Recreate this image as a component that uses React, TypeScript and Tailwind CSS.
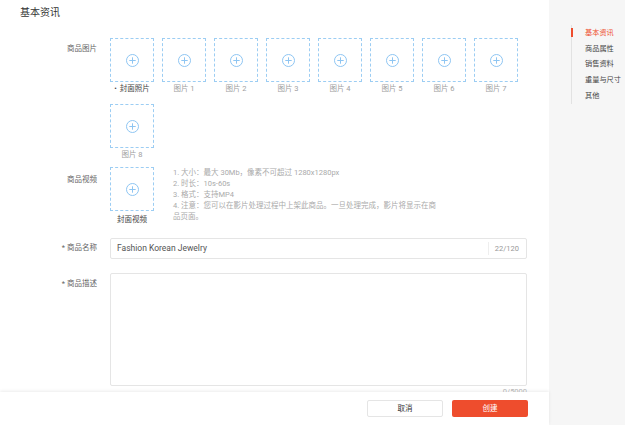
import React from "react";

const font = "font-['Roboto','Noto_Sans_CJK_SC',sans-serif]";

function PlusCircle() {
  return (
    <svg width="13" height="13" viewBox="0 0 13 13" fill="none" stroke="#8ec5f2" strokeWidth="1">
      <circle cx="6.5" cy="6.5" r="6" />
      <line x1="6.5" y1="3.3" x2="6.5" y2="9.7" />
      <line x1="3.3" y1="6.5" x2="9.7" y2="6.5" />
    </svg>
  );
}

function UploadBox({ caption, main }: { caption: string; main?: boolean }) {
  return (
    <div className="flex w-[44px] flex-col items-center">
      <div className="flex h-[44px] w-[44px] items-center justify-center border border-dashed border-[#9ccdf3] bg-white">
        <PlusCircle />
      </div>
      <div
        className={`mt-[2px] whitespace-nowrap text-[7.5px] leading-[10px] ${
          main ? "text-[#444]" : "text-[#a0a0a0]"
        }`}
      >
        {main && <span className="mr-[3px]">•</span>}
        {caption}
      </div>
    </div>
  );
}

function Label({ text, required, pt }: { text: string; required?: boolean; pt: string }) {
  return (
    <div className={`w-[97px] shrink-0 text-right text-[7.5px] leading-[10px] text-[#666] ${pt}`}>
      {required && <span className="mr-[2px]">*</span>}
      {text}
    </div>
  );
}

export default function App() {
  const pics = ["图片 1", "图片 2", "图片 3", "图片 4", "图片 5", "图片 6", "图片 7", "图片 8"];
  const nav = ["基本资讯", "商品属性", "销售资料", "重量与尺寸", "其他"];

  return (
    <div className={`relative flex h-[425px] w-[625px] overflow-hidden bg-white ${font}`}>
      <div className="relative w-[549px] shrink-0 bg-white">
        <div className="pl-[20px] pt-[6px] text-[10px] leading-[14px] text-[#333]">基本资讯</div>

        {/* 商品图片 */}
        <div className="mt-[18px] flex">
          <Label text="商品图片" pt="pt-[6px]" />
          <div className="ml-[13px] flex w-[420px] flex-wrap gap-x-[8px] gap-y-[10px]">
            <UploadBox caption="封面照片" main />
            {pics.map((p) => (
              <UploadBox key={p} caption={p} />
            ))}
          </div>
        </div>

        {/* 商品视频 */}
        <div className="mt-[7px] flex">
          <Label text="商品视频" pt="pt-[8px]" />
          <div className="ml-[13px] flex items-start gap-[19px]">
            <div className="flex w-[44px] flex-col items-center">
              <div className="flex h-[44px] w-[44px] items-center justify-center border border-dashed border-[#9ccdf3]">
                <PlusCircle />
              </div>
              <div className="mt-[4px] whitespace-nowrap text-[7.5px] leading-[10px] text-[#444]">封面视频</div>
            </div>
            <div className="w-[268px] text-[7.5px] leading-[11px] text-[#aaa]">
              <div>1. 大小：最大 30Mb，像素不可超过 1280x1280px</div>
              <div>2. 时长：10s-60s</div>
              <div>3. 格式：支持MP4</div>
              <div>4. 注意：您可以在影片处理过程中上架此商品。一旦处理完成，影片将显示在商品页面。</div>
            </div>
          </div>
        </div>

        {/* 商品名称 */}
        <div className="mt-[13px] flex">
          <Label text="商品名称" required pt="pt-[5px]" />
          <div className="ml-[13px] flex h-[21px] w-[417px] items-center rounded-[2px] border border-[#e5e5e5]">
            <div className="flex-1 pl-[6px] text-[8.5px] text-[#555]">Fashion Korean Jewelry</div>
            <div className="flex h-[13px] items-center border-l border-[#eee] pl-[6px] pr-[7px] text-[7.5px] text-[#999]">
              22/120
            </div>
          </div>
        </div>

        {/* 商品描述 */}
        <div className="mt-[14px] flex">
          <Label text="商品描述" required pt="pt-[6px]" />
          <div className="ml-[13px] w-[417px]">
            <div className="h-[113px] rounded-[2px] border border-[#e5e5e5]" />
            <div className="mt-[1px] text-right text-[7.5px] leading-[10px] text-[#bbb]">0/5000</div>
          </div>
        </div>

        {/* footer */}
        <div className="absolute bottom-0 left-0 flex h-[33px] w-[549px] items-center justify-end gap-[9px] bg-white pr-[21px] shadow-[0_-1px_3px_rgba(0,0,0,0.08)]">
          <button className="flex h-[17px] w-[76px] items-center justify-center rounded-[2px] border border-[#e5e5e5] bg-white text-[7.5px] text-[#333]">
            取消
          </button>
          <button className="flex h-[17px] w-[76px] items-center justify-center rounded-[2px] bg-[#ee4d2d] text-[7.5px] text-white">
            创建
          </button>
        </div>
      </div>

      {/* sidebar */}
      <div className="flex-1 bg-[#f6f6f6] pl-[22px] pt-[25px]">
        <div className="relative border-l border-[#e2e2e2]">
          <div className="absolute left-[-1.5px] top-[3px] h-[9px] w-[2px] bg-[#ee4d2d]" />
          {nav.map((n, i) => (
            <div
              key={n}
              className={`whitespace-nowrap pl-[13px] text-[7.2px] leading-[15.7px] ${
                i === 0 ? "text-[#ee4d2d]" : "text-[#444]"
              }`}
            >
              {n}
            </div>
          ))}
        </div>
      </div>
    </div>
  );
}
